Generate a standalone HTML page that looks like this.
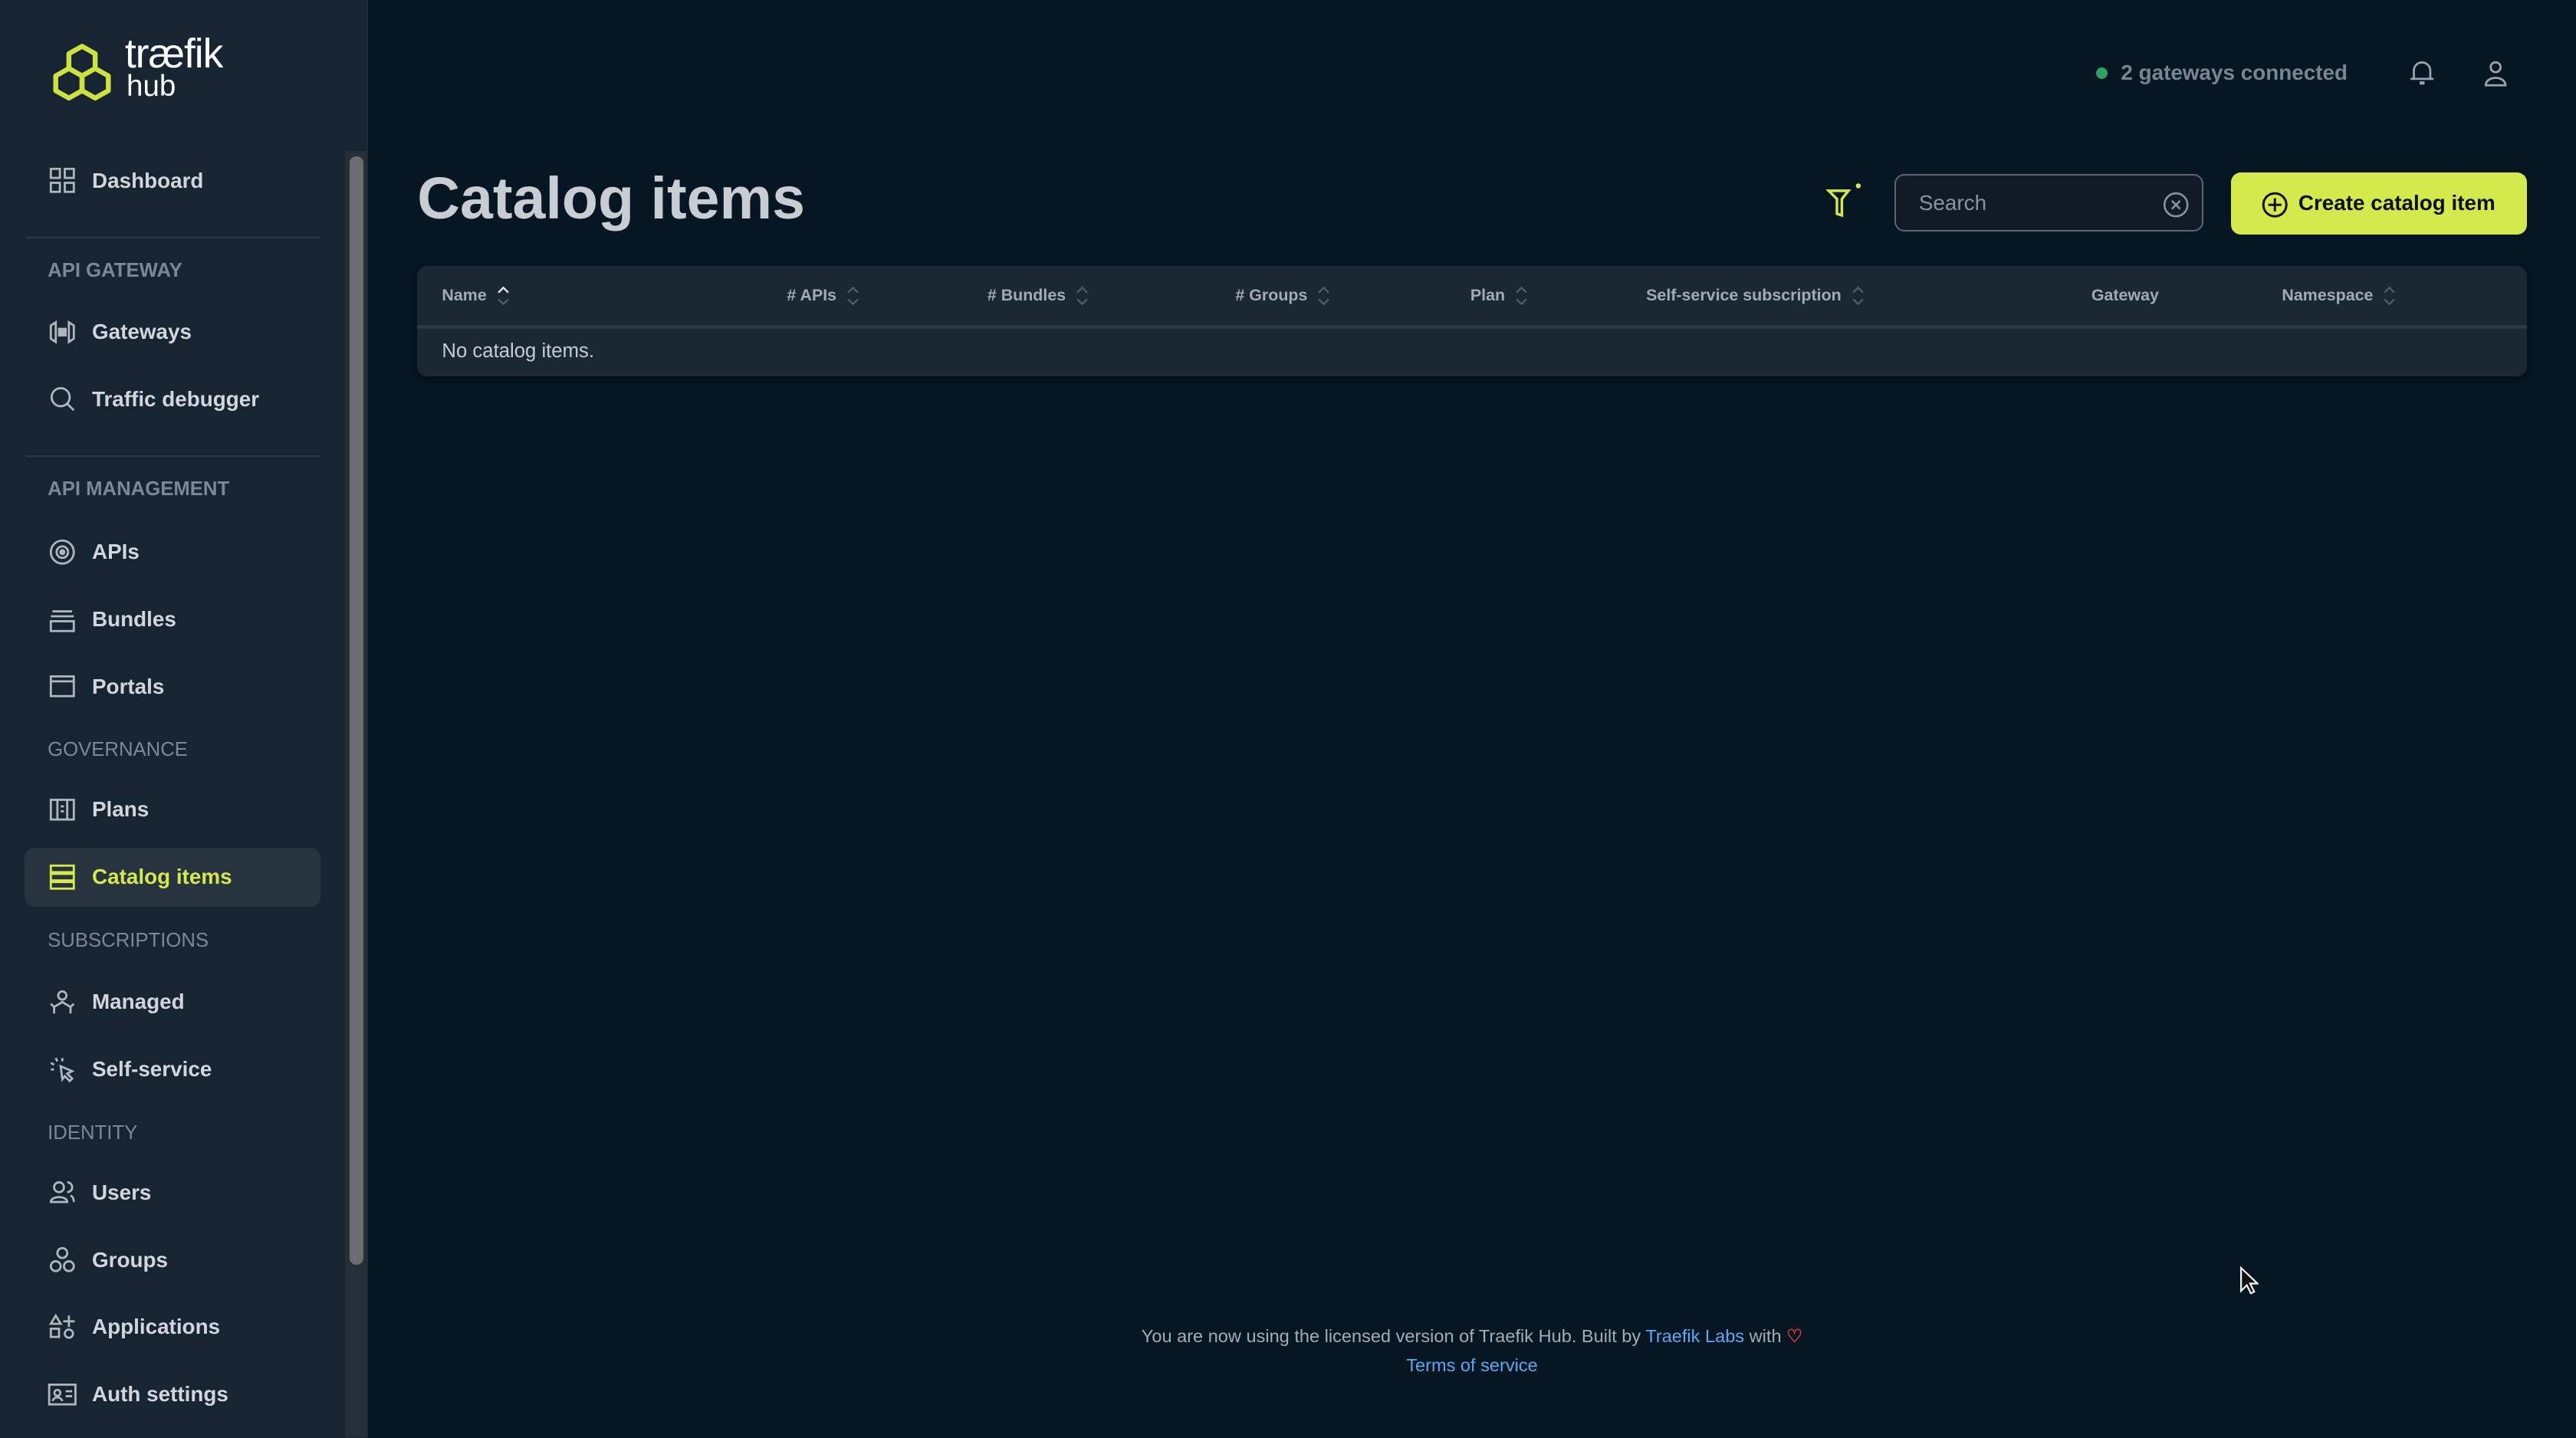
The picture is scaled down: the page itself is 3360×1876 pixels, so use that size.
<!DOCTYPE html>
<html><head><meta charset="utf-8"><style>
html,body{margin:0;padding:0;background:#061622;}
body{width:3360px;height:1876px;overflow:hidden;}
#w{zoom:2.142857;width:1568px;height:875.5px;position:relative;font-family:"Liberation Sans",sans-serif;background:#061622;}
.sb{position:absolute;left:0;top:0;width:223px;height:100%;background:#172431;border-right:1px solid #1f2c38;}
.it{position:absolute;left:29px;height:20px;display:flex;align-items:center;font-size:13px;font-weight:bold;color:#d2d6dc;}
.it svg{width:18px;height:18px;margin-right:9px;stroke:#b0b6be;fill:none;stroke-width:1.3}
.sec{position:absolute;left:29px;font-size:12px;color:#7d8894;}
.sec.b{font-weight:bold;}
.div{position:absolute;left:16px;width:179px;height:1px;background:#2a3744;}
.th{position:absolute;top:173px;font-size:10px;font-weight:bold;color:#a3aab3;display:flex;align-items:center;height:14px}
.th svg{margin-left:6px}
</style></head><body><div id="w">
<div class="sb">
<svg style="position:absolute;left:29px;top:25px" width="42" height="38" viewBox="0 0 42 38"><g fill="none" stroke="#cde23f" stroke-width="3" stroke-linejoin="round"><path d="M21 3l8 4.5v9L21 21l-8-4.5v-9z"/><path d="M13 16.5l8 4.5v9l-8 4.5-8-4.5v-9z"/><path d="M29 16.5l8 4.5v9l-8 4.5-8-4.5v-9z"/></g></svg>
<div style="position:absolute;left:76px;top:19px;font-size:25px;color:#fff;letter-spacing:-0.5px;line-height:28px">træfik</div>
<div style="position:absolute;left:77px;top:43px;font-size:18px;color:#fff;line-height:20px">hub</div>
<div style="position:absolute;left:210px;top:92px;width:13px;height:783px;background:#262f38"></div>
<div style="position:absolute;left:213px;top:95px;width:8px;height:675px;border-radius:4px;background:#6b6d70"></div>

<div class="it" style="top:100px"><svg viewBox="0 0 18 18"><rect x="2" y="2" width="5.5" height="5.5"/><rect x="10.5" y="2" width="5.5" height="5.5"/><rect x="2" y="10.5" width="5.5" height="5.5"/><rect x="10.5" y="10.5" width="5.5" height="5.5"/></svg>Dashboard</div>
<div class="div" style="top:144px"></div>
<div class="sec b" style="top:158px">API GATEWAY</div>
<div class="it" style="top:192px"><svg viewBox="0 0 18 18"><path d="M2 5l3-2v12l-3-2zM16 5l-3-2v12l3-2z"/><rect x="7" y="7" width="4" height="4" fill="#b0b6be"/></svg>Gateways</div>
<div class="it" style="top:233px"><svg viewBox="0 0 18 18"><circle cx="8" cy="8" r="5.5"/><path d="M12 12l4 4"/></svg>Traffic debugger</div>
<div class="div" style="top:277px"></div>
<div class="sec b" style="top:291px">API MANAGEMENT</div>
<div class="it" style="top:326px"><svg viewBox="0 0 18 18"><circle cx="9" cy="9" r="7"/><circle cx="9" cy="9" r="3.5"/><circle cx="9" cy="9" r="1.2" fill="#b0b6be"/></svg>APIs</div>
<div class="it" style="top:367px"><svg viewBox="0 0 18 18"><path d="M3 4h12M2 7h14M2 10h14v6H2z"/></svg>Bundles</div>
<div class="it" style="top:408px"><svg viewBox="0 0 18 18"><rect x="2" y="3" width="14" height="12"/><path d="M2 6h14"/></svg>Portals</div>
<div class="sec" style="top:450px">GOVERNANCE</div>
<div class="it" style="top:483px"><svg viewBox="0 0 18 18"><rect x="2" y="3" width="14" height="12"/><path d="M6 3v12M12 3v12M8 7h2M8 10h2"/></svg>Plans</div>
<div style="position:absolute;left:15px;top:516px;width:180px;height:36px;border-radius:6px;background:#273440"></div>
<div class="it" style="top:524px;color:#d6e84a"><svg viewBox="0 0 18 18" style="stroke:#d6e84a"><rect x="2" y="2" width="14" height="4"/><rect x="2" y="7" width="14" height="4"/><rect x="2" y="12" width="14" height="4"/></svg>Catalog items</div>
<div class="sec" style="top:566px">SUBSCRIPTIONS</div>
<div class="it" style="top:600px"><svg viewBox="0 0 18 18"><circle cx="9" cy="5" r="2.5"/><path d="M4 16v-4l5-3 5 3v4M2 10l2 2M16 10l-2 2"/></svg>Managed</div>
<div class="it" style="top:641px"><svg viewBox="0 0 18 18"><path d="M8 7l7 3-3 1.5 3 3-1.5 1.5-3-3L9 15z"/><path d="M5 2l1 2M2 5l2 1M2 9h2M9 2v2"/></svg>Self-service</div>
<div class="sec" style="top:683px">IDENTITY</div>
<div class="it" style="top:716px"><svg viewBox="0 0 18 18"><circle cx="7" cy="6" r="3"/><path d="M2 15c0-4 10-4 10 0zM12 3a3 3 0 010 6M14 11c2 1 2 3 2 4"/></svg>Users</div>
<div class="it" style="top:757px"><svg viewBox="0 0 18 18"><circle cx="9" cy="5" r="3"/><circle cx="5" cy="13" r="3"/><circle cx="13" cy="13" r="3"/></svg>Groups</div>
<div class="it" style="top:798px"><svg viewBox="0 0 18 18"><path d="M5 2l3 5H2z"/><rect x="2" y="10" width="5" height="5"/><circle cx="13" cy="13" r="2.5"/><path d="M13 2v7M9.5 5.5h7"/></svg>Applications</div>
<div class="it" style="top:839px"><svg viewBox="0 0 18 18"><rect x="1" y="3" width="16" height="12"/><circle cx="6" cy="8" r="1.8"/><path d="M3 13c1-3 5-3 6 0M11 7h4M11 10h4"/></svg>Auth settings</div>
</div>

<div style="position:absolute;left:1276px;top:41px;width:7px;height:7px;border-radius:50%;background:#2ea163"></div>
<div style="position:absolute;left:1291px;top:37px;font-size:13px;font-weight:bold;color:#7a8591">2 gateways connected</div>
<svg style="position:absolute;left:1466px;top:35px" width="17" height="18" viewBox="0 0 17 18" fill="none" stroke="#9aa2ab" stroke-width="1.3"><path d="M3.5 13V8a5 5 0 0110 0v5M1.5 13h14"/><path d="M7 15.5h3" stroke-width="2"/></svg>
<svg style="position:absolute;left:1511px;top:36px" width="16" height="18" viewBox="0 0 16 18" fill="none" stroke="#9aa2ab" stroke-width="1.3"><circle cx="8" cy="5" r="3"/><path d="M2 16c0-6 12-6 12 0z"/></svg>

<div style="position:absolute;left:254px;top:99px;font-size:36px;font-weight:bold;color:#c8cdd3;line-height:44px">Catalog items</div>
<svg style="position:absolute;left:1111px;top:110px" width="24" height="24" viewBox="0 0 24 24" fill="none" stroke="#d6e84a" stroke-width="1.6"><path d="M2 6h12l-4 5v10l-3-1v-9z"/><circle cx="20" cy="3" r="1.5" fill="#d6e84a" stroke="none"/></svg>
<div style="position:absolute;left:1153px;top:106px;width:188px;height:35px;border:1px solid #5d6670;border-radius:6px;background:#101b26;box-sizing:border-box"></div>
<div style="position:absolute;left:1168px;top:116px;font-size:13px;color:#8b939c">Search</div>
<svg style="position:absolute;left:1316px;top:116px" width="17" height="17" viewBox="0 0 17 17" fill="none" stroke="#8b939c" stroke-width="1.2"><circle cx="8.5" cy="8.5" r="7"/><path d="M6 6l5 5M11 6l-5 5"/></svg>
<div style="position:absolute;left:1358px;top:105px;width:180px;height:38px;border-radius:6px;background:#d4e94b"></div>
<svg style="position:absolute;left:1376px;top:116px" width="17" height="17" viewBox="0 0 17 17" fill="none" stroke="#111" stroke-width="1.4"><circle cx="8.5" cy="8.5" r="7"/><path d="M8.5 4.5v8M4.5 8.5h8"/></svg>
<div style="position:absolute;left:1399px;top:116px;font-size:13px;font-weight:bold;color:#0c1117">Create catalog item</div>

<div style="position:absolute;left:254px;top:162px;width:1284px;height:67px;border-radius:6px;background:#1a2834;box-shadow:0 2px 4px rgba(0,0,0,.3)"></div>
<div style="position:absolute;left:254px;top:198px;width:1284px;height:2px;background:#2c3a46"></div>
<div class="th" style="left:269px">Name<svg width="8" height="14" viewBox="0 0 8 14" fill="none" stroke-width="1.1"><path d="M1 5l3-3 3 3" stroke="#e6e9ec"/><path d="M1 9l3 3 3-3" stroke="#4f5b67"/></svg></div>
<div class="th" style="left:479px"># APIs<svg width="8" height="14" viewBox="0 0 8 14" fill="none" stroke="#4f5b67" stroke-width="1.1"><path d="M1 5l3-3 3 3M1 9l3 3 3-3"/></svg></div>
<div class="th" style="left:601px"># Bundles<svg width="8" height="14" viewBox="0 0 8 14" fill="none" stroke="#4f5b67" stroke-width="1.1"><path d="M1 5l3-3 3 3M1 9l3 3 3-3"/></svg></div>
<div class="th" style="left:752px"># Groups<svg width="8" height="14" viewBox="0 0 8 14" fill="none" stroke="#4f5b67" stroke-width="1.1"><path d="M1 5l3-3 3 3M1 9l3 3 3-3"/></svg></div>
<div class="th" style="left:895px">Plan<svg width="8" height="14" viewBox="0 0 8 14" fill="none" stroke="#4f5b67" stroke-width="1.1"><path d="M1 5l3-3 3 3M1 9l3 3 3-3"/></svg></div>
<div class="th" style="left:1002px">Self-service subscription<svg width="8" height="14" viewBox="0 0 8 14" fill="none" stroke="#4f5b67" stroke-width="1.1"><path d="M1 5l3-3 3 3M1 9l3 3 3-3"/></svg></div>
<div class="th" style="left:1273px">Gateway</div>
<div class="th" style="left:1389px">Namespace<svg width="8" height="14" viewBox="0 0 8 14" fill="none" stroke="#4f5b67" stroke-width="1.1"><path d="M1 5l3-3 3 3M1 9l3 3 3-3"/></svg></div>
<div style="position:absolute;left:269px;top:207px;font-size:12px;color:#c8ccd2">No catalog items.</div>

<div style="position:absolute;left:224px;width:1344px;top:805px;text-align:center;font-size:11px;color:#a5acb4;line-height:17.5px">You are now using the licensed version of Traefik Hub. Built by <span style="color:#5aa9f0">Traefik Labs</span> with <span style="color:#e0393e;font-weight:bold">♡</span><br><span style="color:#5aa9f0">Terms of service</span></div>
<svg style="position:absolute;left:1363px;top:771px" width="12" height="18" viewBox="0 0 12 18"><path d="M1 1v14l3.5-3.5 2.5 5 2-1-2.5-5H11z" fill="#111" stroke="#fff" stroke-width="1"/></svg>
</div></body></html>
